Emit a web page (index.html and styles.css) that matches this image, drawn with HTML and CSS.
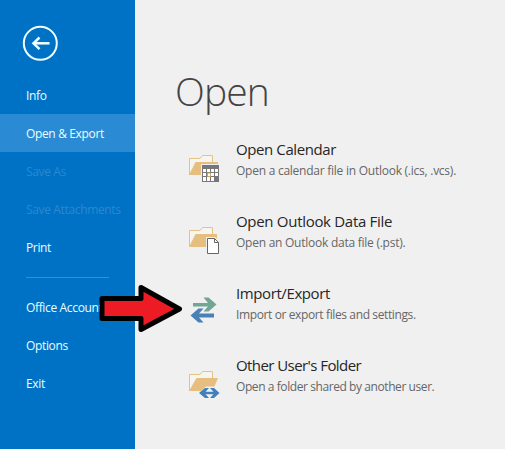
FILE: index.html
```html
<!DOCTYPE html>
<html lang="en">
<head>
<meta charset="utf-8">
<title>Open</title>
<link rel="stylesheet" href="styles.css">
</head>
<body>
<div class="app">
  <nav class="sidebar">
    <div class="back">
      <svg width="36" height="36" viewBox="0 0 36 36" fill="none" stroke="#f2ffff">
        <circle cx="18.300" cy="18.300" r="16.500" stroke-width="2"/>
        <path d="M27.500 18.300H12" stroke-width="2.500"/>
        <path d="M17.500 12.500L11.500 18.300l6 5.800" stroke-width="2.500"/>
      </svg>
    </div>
    <a class="item">Info</a>
    <a class="item active">Open &amp; Export</a>
    <a class="item disabled">Save As</a>
    <a class="item disabled">Save Attachments</a>
    <a class="item">Print</a>
    <div class="divider"></div>
    <a class="item">Office Account</a>
    <a class="item">Options</a>
    <a class="item">Exit</a>
  </nav>
  <main class="content">
    <h1>Open</h1>
    <section class="entry calendar">
      <svg class="icon" width="34" height="34" viewBox="0 0 34 34">
        <path d="M2.500 24V7.500H13l2.500-3H25.500V12" fill="#f7f5ef" stroke="#e3c383"/>
        <path d="M2 24L8.500 11H31V24z" fill="#e6bf80"/>
        <path d="M14 13H33V32H14z" fill="#f0f0f0"/>
        <path d="M15 14H32V31H15z" fill="#777779"/>
        <path d="M16 18h3v3h-3zm4 0h3v3h-3zm4 0h3v3h-3zm4 0h3v3h-3zM16 22h3v3h-3zm8 0h3v3h-3zm4 0h3v3h-3zM16 26h3v4h-3zm4 0h3v4h-3zm4 0h3v4h-3z" fill="#fff"/>
        <path d="M20.500 22h3v3.500h-3z" fill="#fff" stroke="#d3a25a"/>
      </svg>
      <div class="text"><h2>Open Calendar</h2><p>Open a calendar file in Outlook (.ics, .vcs).</p></div>
    </section>
    <section class="entry data-file">
      <svg class="icon" width="34" height="34" viewBox="0 0 34 34">
        <path d="M2.500 23V7.500H13l2.500-3H25.500V12" fill="#f7f5ef" stroke="#e3c383"/>
        <path d="M2 24L8.500 11H30V24z" fill="#e6bf80"/>
        <path d="M19 14H28L33 19V32H19z" fill="#f0f0f0"/>
        <path d="M20.500 15.500H27.500L31.500 19.500V30.500H20.500z" fill="#fff" stroke="#666"/>
        <path d="M27.500 15.500v4h4" fill="none" stroke="#666"/>
      </svg>
      <div class="text"><h2>Open Outlook Data File</h2><p>Open an Outlook data file (.pst).</p></div>
    </section>
    <section class="entry transfer">
      <svg class="icon" width="34" height="34" viewBox="0 0 34 34">
        <path d="M6 8H21L16.500 2.500H21.500L29.500 9.500L21.500 16.500H16.500L21 11.500H6z" fill="#72a593"/>
        <path d="M27 18.500H12L16.500 13.500H11.500L3.500 20.500L11.500 27.500H16.500L12 22.500H27z" fill="#4a80b8"/>
      </svg>
      <div class="text"><h2>Import/Export</h2><p>Import or export files and settings.</p></div>
    </section>
    <section class="entry shared">
      <svg class="icon" width="34" height="34" viewBox="0 0 34 34">
        <path d="M2.500 24V7.500H13l2.500-3H25.500V12" fill="#f7f5ef" stroke="#e3c383"/>
        <path d="M2 24L9.500 11H31L25.500 24z" fill="#e6bf80"/>
        <path d="M11 26.500L19 19.500H27.500L34 26.500L27.500 32h-9z" fill="#f0f0f0"/>
        <path d="M12 26L18 21H22L18.500 24.700H26.500L23 21H27L32.500 26L27 31H23L26.500 27.300H18.500L22 31H18z" fill="#3f7fbb"/>
      </svg>
      <div class="text"><h2>Other User's Folder</h2><p>Open a folder shared by another user.</p></div>
    </section>
  </main>
  <svg class="pointer" width="86" height="50" viewBox="0 0 86 50">
    <path d="M4 14.500H43V3.500L81.500 25L43 45.500V34.500H4z" fill="#ed1c24" stroke="#000" stroke-width="5" stroke-linejoin="round"/>
  </svg>
</div>
</body>
</html>
```
FILE: styles.css
```css
* { box-sizing: border-box; }
body { margin: 0; font-family: "Open Sans", "Noto Sans", sans-serif; }
.app { position: relative; display: flex; width: 505px; height: 449px; overflow: hidden; background: #f0f0f0; }
.sidebar { width: 135px; flex: none; background: #0072c6; }
.back { height: 76px; padding: 25px 0 0 22px; }
.back svg { display: block; }
.item { display: block; height: 38px; padding-left: 26px; line-height: 39px; font-size: 12px; letter-spacing: -0.35px; color: #e9ffff; white-space: nowrap; }
.active { background: #2a8ad4; }
.disabled { color: #2a88d0; }
.divider { height: 1px; margin: 11px 26px 10px; background: #2f90da; }
.content { flex: 1; padding: 62px 0 0 51px; }
h1 { margin: 0 0 10px -11px; height: 58px; line-height: 58px; font-size: 39px; font-weight: 300; letter-spacing: -0.9px; color: #444; }
.entry { display: flex; height: 72px; padding-top: 9px; }
.icon { flex: none; margin: 12px 0 0 1px; }
.text { margin-left: 15px; white-space: nowrap; }
h2 { margin: 0; line-height: 20px; font-size: 15px; font-weight: 400; letter-spacing: -0.4px; color: #262626; }
p { margin: 2px 0 0; line-height: 19px; font-size: 12px; letter-spacing: -0.25px; color: #666; }
.data-file h2 { letter-spacing: -0.3px; }
.shared h2 { letter-spacing: -0.57px; }
.transfer p { letter-spacing: -0.38px; }
.shared p { letter-spacing: -0.42px; }
.pointer { position: absolute; left: 98px; top: 284px; }
```
